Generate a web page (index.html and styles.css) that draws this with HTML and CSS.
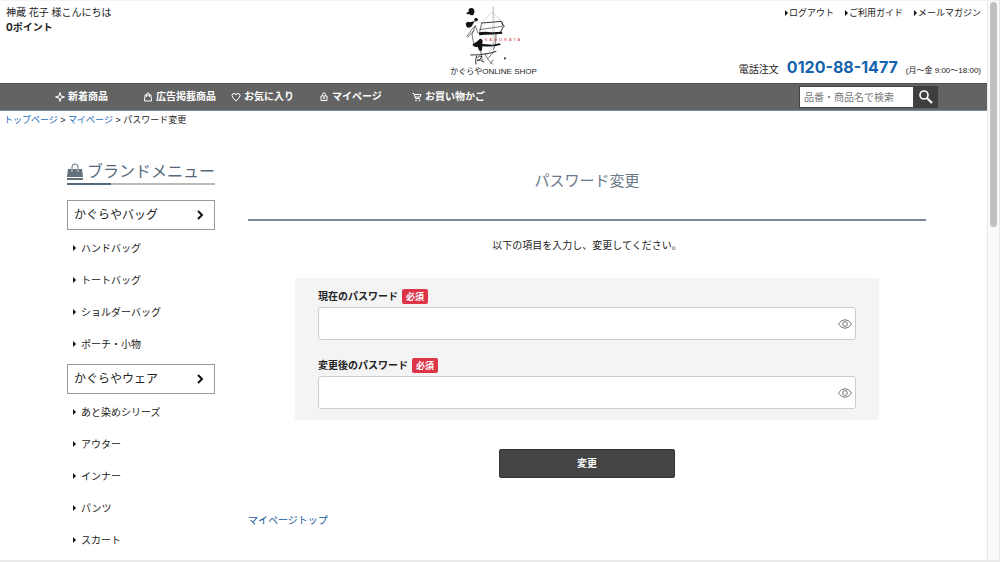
FILE: index.html
```html
<!DOCTYPE html>
<html lang="ja">
<head>
    <meta charset="UTF-8">
    <meta name="viewport" content="width=device-width, initial-scale=1">
    <title>パスワード変更 | かぐらやONLINE SHOP</title>
    <link rel="stylesheet" href="styles.css">
</head>
<body>
    <div class="window">
        <div class="page">
            <header class="header">
                <div class="member">
                    <p>神蔵 花子 様こんにちは</p>
                    <p class="point">0ポイント</p>
                </div>

                <a href="#" class="logo">
                    <svg width="60" height="62" viewBox="72 12 180 186" aria-hidden="true">
                        <g fill="#111">
                            <path d="M86 24 Q96 18 102 25 Q106 33 100 42 Q92 45 88 39 L80 40 Q78 34 86 32Z"/>
                            <path d="M102 54 Q109 48 114 55 Q114 63 105 61Z"/>
                            <path d="M77 68 Q82 59 90 64 L105 60 Q99 68 96 75 Q88 84 80 78Z"/>
                            <path d="M116 94 Q135 91 154 94 L186 92 L187 98 Q160 101 134 101 L118 103Z"/>
                            <path d="M98 129 Q110 124 116 117 Q123 109 128 119 L127 129 L158 131 L178 127 L183 131 Q158 139 127 136 L126 148 Q118 153 115 143 L113 137 Q104 140 98 133Z"/>
                            <path d="M192 170 Q196 167 198 171 Q197 176 193 175Z"/>
                        </g>
                        <g fill="none" stroke="#333" stroke-width="2">
                            <path d="M80 107 Q94 85 106 74 L96 101 Q98 120 104 132"/>
                            <path d="M82 110 L102 88 M106 74 L114 97 M125 65 L119 94"/>
                            <path d="M124 66 Q154 64 184 61 L190 77 L182 93" stroke-width="3"/>
                            <path d="M118 86 L187 76 M184 60 L194 78"/>
                            <path d="M168 100 Q170 125 160 148"/>
                            <path d="M91 162 Q116 163 147 157 L169 151" stroke-width="3"/>
                            <path d="M110 164 Q105 177 108 190 M112 170 Q119 162 126 167 Q118 181 111 178 Q121 174 133 184" stroke-width="3"/>
                            <path d="M122 150 L127 178 M134 158 Q145 180 158 190"/>
                            <path d="M163 151 L144 172 M160 176 L152 188"/>
                        </g>
                        <g fill="none" stroke="#888" stroke-width="1">
                            <path d="M159 17 Q157 80 160 149 M160 18 L165 130"/>
                            <path d="M157 32 L124 66 M160 34 L184 62"/>
                            <path d="M119 86 L134 70 M168 105 Q154 148 131 177"/>
                        </g>
                        <text class="logo-mark" x="134" y="119">KAGURAYA</text>
                    </svg>
                    <span>かぐらやONLINE SHOP</span>
                </a>

                <div class="header-right">
                    <ul class="sub-menu">
                        <li><a href="#">ログアウト</a></li>
                        <li><a href="#">ご利用ガイド</a></li>
                        <li><a href="#">メールマガジン</a></li>
                    </ul>
                    <p class="tel">電話注文 <strong>0120-88-1477</strong> <small>(月〜金 9:00〜18:00)</small></p>
                </div>
            </header>

            <nav class="nav">
                <ul class="nav-list">
                    <li><a href="#">
                        <svg class="icon" viewBox="0 0 20 20"><path d="M10 1 L12 8 L19 10 L12 12 L10 19 L8 12 L1 10 L8 8Z"/></svg>新着商品</a></li>
                    <li><a href="#">
                        <svg class="icon" viewBox="0 0 20 20"><path d="M4 6 H16 L17 18 H3Z M7 10 V5 Q7 2 10 2 Q13 2 13 5 V10"/></svg>広告掲載商品</a></li>
                    <li><a href="#">
                        <svg class="icon" viewBox="0 0 20 20"><path d="M10 18 Q2 11 2 7 Q2 3 6 3 Q9 3 10 6 Q11 3 14 3 Q18 3 18 7 Q18 11 10 18Z"/></svg>お気に入り</a></li>
                    <li><a href="#">
                        <svg class="icon" viewBox="0 0 20 20"><path d="M4 8 H16 V17 H4Z M7 8 V5 Q7 2 10 2 Q13 2 13 5 V8 M10 11 V14 M8 12 H12"/></svg>マイページ</a></li>
                    <li><a href="#">
                        <svg class="icon" viewBox="0 0 20 20"><path d="M1 3 H4 L7 13 H16 M5 5 H18 L16 10 H6"/><circle cx="8" cy="17" r="1"/><circle cx="15" cy="17" r="1"/></svg>お買い物かご</a></li>
                </ul>
                <form class="search">
                    <input type="text" placeholder="品番・商品名で検索" aria-label="商品検索">
                    <button type="submit" aria-label="検索">
                        <svg width="14" height="14" viewBox="0 0 14 14" fill="none" stroke="#fff"><circle cx="5" cy="5" r="4" stroke-width="1.6"/><path d="M8 8 L13 13" stroke-width="2.2"/></svg>
                    </button>
                </form>
            </nav>

            <p class="breadcrumb"><a href="#">トップページ</a> &gt; <a href="#">マイページ</a> &gt; パスワード変更</p>

            <div class="content">
                <aside class="sidebar">
                    <h2 class="brand-title">
                        <svg width="17" height="17" viewBox="0 0 17 17"><path d="M1 6 H15 L16 14 H0Z M0 15 H16 V17 H0Z" fill="#63717f"/><path d="M5 9 V4 Q5 1 8 1 Q11 1 11 4 V9" fill="none" stroke="#63717f"/><path d="M5 6 V9 M11 6 V9" stroke="#d5dade"/></svg>
                        ブランドメニュー
                    </h2>

                    <a href="#" class="category">かぐらやバッグ
                        <svg width="8" height="10" viewBox="0 0 8 10"><path d="M2 1 L6 5 L2 9"/></svg></a>
                    <ul class="brand-list">
                        <li><a href="#">ハンドバッグ</a></li>
                        <li><a href="#">トートバッグ</a></li>
                        <li><a href="#">ショルダーバッグ</a></li>
                        <li><a href="#">ポーチ・小物</a></li>
                    </ul>

                    <a href="#" class="category">かぐらやウェア
                        <svg width="8" height="10" viewBox="0 0 8 10"><path d="M2 1 L6 5 L2 9"/></svg></a>
                    <ul class="brand-list">
                        <li><a href="#">あと染めシリーズ</a></li>
                        <li><a href="#">アウター</a></li>
                        <li><a href="#">インナー</a></li>
                        <li><a href="#">パンツ</a></li>
                        <li><a href="#">スカート</a></li>
                    </ul>
                </aside>

                <main class="main">
                    <h1>パスワード変更</h1>
                    <p class="message">以下の項目を入力し、変更してください。</p>

                    <form>
                        <div class="fields">
                            <div class="field">
                                <label for="current">現在のパスワード <span class="required">必須</span></label>
                                <div class="input-wrap">
                                    <input type="password" id="current">
                                    <button type="button" class="eye" aria-label="パスワードを表示">
                                        <svg width="14" height="10" viewBox="0 0 14 10"><path d="M0.5 5 Q3 0.7 7 0.7 Q11 0.7 13.5 5 Q11 9.3 7 9.3 Q3 9.3 0.5 5Z"/><circle cx="7" cy="5" r="2.4"/></svg>
                                    </button>
                                </div>
                            </div>
                            <div class="field">
                                <label for="renewed">変更後のパスワード <span class="required">必須</span></label>
                                <div class="input-wrap">
                                    <input type="password" id="renewed">
                                    <button type="button" class="eye" aria-label="パスワードを表示">
                                        <svg width="14" height="10" viewBox="0 0 14 10"><path d="M0.5 5 Q3 0.7 7 0.7 Q11 0.7 13.5 5 Q11 9.3 7 9.3 Q3 9.3 0.5 5Z"/><circle cx="7" cy="5" r="2.4"/></svg>
                                    </button>
                                </div>
                            </div>
                        </div>
                        <button type="submit" class="submit">変更</button>
                    </form>

                    <a href="#" class="mypage-top">マイページトップ</a>
                </main>
            </div>
        </div>
        <div class="scrollbar"><div class="thumb"></div></div>
    </div>
</body>
</html>
```
FILE: styles.css
```css
* {
    box-sizing: border-box;
}

body {
    margin: 0;
    font-family: Inter, "Noto Sans CJK JP", sans-serif;
    font-size: 10px;
    line-height: 15px;
    color: #222;
    background-color: #fff;
}

h1, h2, p, ul {
    margin: 0;
    padding: 0;
}

ul {
    list-style: none;
}

a {
    color: inherit;
    text-decoration: none;
}

input, button {
    font-family: inherit;
    font-size: 10px;
}

.window {
    display: flex;
    min-height: 100vh;
    border-top: 1px solid #f4f4f4;
    border-right: 1px solid #e6e6e6;
    border-bottom: 2px solid #ebebeb;
}

.page {
    flex: 1;
    min-width: 0;
}

/* header */
.header {
    display: grid;
    grid-template-columns: 1fr auto 1fr;
    height: 82px;
    padding: 4px 6px 4px;
}

.point {
    font-weight: bold;
}

.logo {
    display: flex;
    flex-direction: column;
    align-items: center;
    font-family: "Liberation Sans", "Noto Sans CJK JP", sans-serif;
    font-size: 8px;
    line-height: 10px;
}

.logo-mark {
    fill: #d9363e;
    font-size: 12px;
    letter-spacing: 6px;
}

.header-right {
    display: flex;
    flex-direction: column;
    justify-content: space-between;
    align-items: flex-end;
}

.sub-menu {
    display: flex;
    gap: 11px;
    font-size: 9px;
}

.sub-menu a {
    display: flex;
    align-items: center;
    gap: 1px;
}

/* small triangle before links */
.sub-menu a::before,
.brand-list a::before {
    content: "";
    border: 3px solid transparent;
    border-left-color: #111;
    border-right-width: 0;
}

.tel {
    display: flex;
    align-items: baseline;
    line-height: 16px;
    gap: 8px;
}

.tel strong {
    color: #1463ae;
    font-size: 16px;
}

.tel small {
    font-family: "Liberation Sans", "Noto Sans CJK JP", sans-serif;
    font-size: 8px;
}

/* navigation */
.nav {
    display: flex;
    justify-content: space-between;
    align-items: center;
    height: 28px;
    padding: 0 49px 1px 55px;
    background-color: #636363;
    border-top: 1px solid #4f4f4f;
    border-bottom: 1px solid #7d8d9b;
}

.nav-list {
    display: grid;
    grid-template-columns: repeat(3, 88px) 93px auto;
    color: #fff;
    font-weight: bold;
    white-space: nowrap;
}

.nav-list a {
    display: flex;
    align-items: center;
    gap: 3px;
}

.icon {
    width: 10px;
    height: 10px;
    fill: none;
    stroke: #fff;
    stroke-width: 2;
}

.search {
    display: flex;
    height: 22px;
}

.search input {
    width: 115px;
    padding: 0 4px;
    border: 1px solid #444;
    border-radius: 0;
    background-color: #fff;
}

.search input::placeholder {
    color: #777;
}

.search button {
    display: flex;
    justify-content: center;
    align-items: center;
    width: 24px;
    padding: 0;
    border: none;
    background-color: #3f3f3f;
}

.breadcrumb {
    padding: 2px 4px;
    font-family: "Liberation Sans", "Noto Sans CJK JP", sans-serif;
    font-size: 9px;
}

.breadcrumb a {
    color: #1a6db5;
}

/* two columns */
.content {
    display: flex;
    gap: 33px;
    padding: 30px 61px 0 67px;
}

.sidebar {
    width: 148px;
    flex-shrink: 0;
}

.brand-title {
    display: flex;
    align-items: center;
    gap: 3px;
    height: 25px;
    margin-bottom: 15px;
    border-bottom: 2px solid;
    border-image: linear-gradient(to right, #55697e 30%, #bbb 30%) 1;
    color: #55697e;
    font-size: 16px;
    font-weight: normal;
    white-space: nowrap;
}

.category {
    display: flex;
    justify-content: space-between;
    align-items: center;
    height: 30px;
    padding: 0 10px 1px 6px;
    border: 1px solid #999;
    font-size: 12px;
}

.category svg {
    fill: none;
    stroke: #111;
    stroke-width: 2;
}

.brand-list {
    padding: 2px 0 4px;
}

.brand-list a {
    display: flex;
    align-items: center;
    gap: 5px;
    height: 32px;
    padding-left: 6px;
}

.main {
    flex: 1;
    min-width: 0;
}

.main h1 {
    padding: 11px 0 28px;
    border-bottom: 2px solid #7d8893;
    color: #6b7a89;
    font-size: 15px;
    line-height: 20px;
    font-weight: normal;
    text-align: center;
}

.message {
    padding: 17px 0 25px;
    text-align: center;
}

.fields {
    display: flex;
    flex-direction: column;
    gap: 18px;
    margin: 0 47px 29px;
    padding: 11px 23px;
    background-color: #f4f4f4;
}

.field label {
    display: flex;
    align-items: center;
    gap: 4px;
    margin-bottom: 3px;
    font-weight: bold;
}

.required {
    padding: 0 4px;
    border-radius: 2px;
    background-color: #dc3548;
    color: #fff;
    font-size: 9px;
}

.input-wrap {
    position: relative;
}

.input-wrap input {
    display: block;
    width: 100%;
    height: 33px;
    padding: 0 28px 0 8px;
    border: 1px solid #ccc;
    border-radius: 3px;
    background-color: #fff;
}

.eye {
    position: absolute;
    top: 0;
    right: 4px;
    display: flex;
    align-items: center;
    height: 100%;
    padding: 0;
    border: none;
    background: none;
}

.eye svg {
    fill: none;
    stroke: #777;
}

.submit {
    display: block;
    width: 176px;
    height: 29px;
    margin: 0 auto 35px;
    padding: 0 0 2px;
    border: 1px solid #333;
    border-radius: 2px;
    background-color: #444;
    color: #fff;
    font-weight: bold;
}

.mypage-top {
    color: #17589c;
}

/* scroll track on the right edge */
.scrollbar {
    width: 12px;
    padding: 1px 2px;
    border-left: 1px solid #e8e8e8;
    background-color: #fafafa;
}

.thumb {
    height: 40vh;
    border-radius: 4px;
    background-color: #c1c1c1;
}
```
